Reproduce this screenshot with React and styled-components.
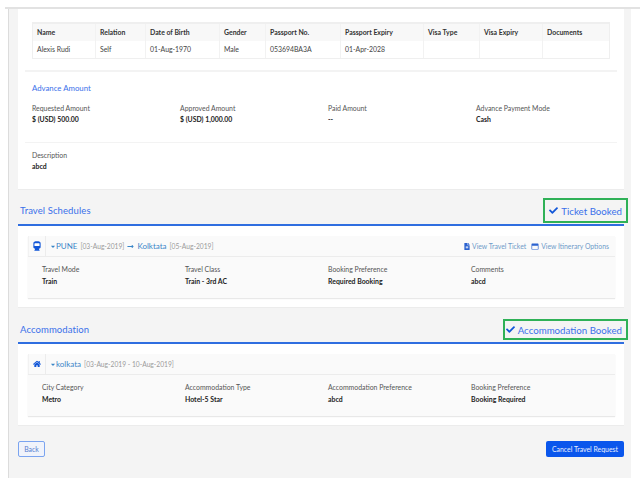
import styled, { createGlobalStyle } from 'styled-components';
import { FaCheck, FaCaretDown, FaHome, FaFileAlt, FaLongArrowAltRight, FaRegWindowMaximize } from 'react-icons/fa';

const GlobalStyle = createGlobalStyle`
  html, body {
    margin: 0;
    padding: 0;
    background: #fff;
    font-family: "Lato", "Liberation Sans", sans-serif;
    color: #333;
  }
`;

const Page = styled.div`
  width: 640px;
  height: 489px;
  padding: 7px 0 0 5px;
  box-sizing: border-box;
  overflow: hidden;
`;

const TopLine = styled.div`
  height: 2px;
  background: #e2e2e2;
`;

const Shell = styled.div`
  width: 623px;
  height: 469px;
  margin-left: 3px;
  box-sizing: border-box;
  padding: 0 7px 0 9px;
  background: #f4f4f4;
  border-left: 1px solid #dcdcdc;
`;

const Card = styled.section`
  background: #fff;
  box-shadow: 0 1px 0 #ececec;
  padding: 13px 0 17px;
`;

const Table = styled.div`
  margin: 0 14px;
  border: 1px solid #efefef;
  border-top-width: 2px;
`;

const Row = styled.div`
  display: grid;
  grid-template-columns: 62px 50px 74px 46px 75px 83px 56px 63px 1fr;
  height: 17px;
  background: ${p => (p.$head ? '#f8f8f8' : '#fff')};
`;

const Cell = styled.div`
  padding-left: 4px;
  font-size: 6.9px;
  line-height: 17px;
  white-space: nowrap;
  font-weight: ${p => (p.$head ? 700 : 400)};
  color: ${p => (p.$head ? '#333' : '#444')};
  & + & {
    border-left: 1px solid #f2f2f2;
  }
`;

const Divider = styled.div`
  height: ${p => p.$size || 1}px;
  margin: ${p => p.$margin};
  background: #f3f3f3;
`;

const SubTitle = styled.h3`
  margin: 0 14px;
  font-size: 7.8px;
  line-height: 12px;
  font-weight: 400;
  color: #3a70ea;
`;

const Fields = styled.div`
  display: grid;
  grid-template-columns: repeat(4, ${p => p.$width}px);
  padding: ${p => p.$padding};
`;

const Field = styled.div`
  font-size: 6.9px;
  line-height: 11px;
  white-space: nowrap;
`;

const Label = styled.div`
  color: #555;
`;

const Value = styled.div`
  color: #222;
  font-weight: 700;
`;

const SectionHead = styled.header`
  display: flex;
  align-items: center;
  justify-content: space-between;
  padding: ${p => p.$padding};
  margin-right: -4px;
  margin-left: 2px;
`;

const SectionTitle = styled.h2`
  margin: 0;
  font-size: 9.5px;
  font-weight: 400;
  color: #3a70ea;
  letter-spacing: 0.1px;
`;

const BookedBadge = styled.div`
  display: flex;
  align-items: center;
  justify-content: flex-end;
  gap: 3px;
  box-sizing: border-box;
  width: ${p => p.$width}px;
  height: ${p => p.$height}px;
  padding-right: 4px;
  border: 2px solid #2fb157;
  font-size: 9.7px;
  color: #3a70ea;
  white-space: nowrap;
  svg {
    flex-shrink: 0;
    width: 9px;
    height: 9px;
    color: #1257d8;
  }
`;

const SectionCard = styled.section`
  background: #fff;
  border-top: 2px solid #2f6ee0;
  padding: 10px 9px 9px 10px;
  box-shadow: 0 1px 0 #ececec;
`;

const Panel = styled.div`
  background: #fafafa;
  box-shadow: 0 1px 1px #e8e8e8;
  ${Value} {
    margin-top: 1px;
  }
`;

const PanelHead = styled.div`
  display: flex;
  align-items: center;
  height: 20px;
  border-bottom: 1px solid #ececec;
`;

const IconCell = styled.div`
  display: flex;
  align-items: center;
  justify-content: center;
  width: 16px;
  height: 100%;
  border-right: 1px solid #ececec;
  border-left: 1px solid #f2f2f2;
  color: #1257d8;
  svg {
    width: ${p => p.$size}px;
    height: ${p => p.$size}px;
  }
`;

const Route = styled.div`
  display: flex;
  align-items: center;
  flex: 1;
  padding-left: 4px;
  white-space: nowrap;
  color: #9a9a9a;
  font-size: 6.7px;
`;

const Caret = styled(FaCaretDown)`
  width: 6px;
  height: 7px;
  color: #3a86c8;
`;

const Place = styled.span`
  font-size: 8px;
  color: #3a86c8;
  margin-right: 3px;
`;

const Arrow = styled(FaLongArrowAltRight)`
  width: 9px;
  height: 7px;
  margin: 0 2px;
  color: #3a86c8;
`;

const Links = styled.div`
  display: flex;
  gap: 5px;
  padding-right: 6px;
`;

const TicketLink = styled.a`
  display: flex;
  align-items: center;
  gap: 2px;
  font-size: 6.85px;
  white-space: nowrap;
  color: #6f9bc9;
  svg {
    width: ${p => p.$icon}px;
    height: 7px;
    color: #2b62cf;
  }
`;

const Footer = styled.footer`
  display: flex;
  align-items: center;
  justify-content: space-between;
  margin-top: 16px;
`;

const BackButton = styled.button`
  width: 27px;
  height: 16px;
  padding: 0;
  border: 1.5px solid #7ba4f0;
  border-radius: 2px;
  background: #f0f3fb;
  font: inherit;
  font-size: 6.9px;
  color: #5a7fd0;
`;

const CancelButton = styled.button`
  width: 78px;
  height: 16px;
  padding: 0;
  border: 0;
  border-radius: 2px;
  background: #0a56ec;
  font: inherit;
  font-size: 6.9px;
  color: #e8efff;
`;

const travellers = [
  ['Name', 'Relation', 'Date of Birth', 'Gender', 'Passport No.', 'Passport Expiry', 'Visa Type', 'Visa Expiry', 'Documents'],
  ['Alexis Rudi', 'Self', '01-Aug-1970', 'Male', '053694BA3A', '01-Apr-2028', '', '', ''],
];

const advance = [
  ['Requested Amount', '$ (USD) 500.00'],
  ['Approved Amount', '$ (USD) 1,000.00'],
  ['Paid Amount', '--'],
  ['Advance Payment Mode', 'Cash'],
];

const travel = [
  ['Travel Mode', 'Train'],
  ['Travel Class', 'Train - 3rd AC'],
  ['Booking Preference', 'Required Booking'],
  ['Comments', 'abcd'],
];

const stay = [
  ['City Category', 'Metro'],
  ['Accommodation Type', 'Hotel-5 Star'],
  ['Accommodation Preference', 'abcd'],
  ['Booking Preference', 'Booking Required'],
];

function FieldList({ items }) {
  return items.map(([label, value]) => (
    <Field key={label}>
      <Label>{label}</Label>
      <Value>{value}</Value>
    </Field>
  ));
}

function TrainIcon() {
  return (
    <svg viewBox="0 0 10 11">
      <path fill="currentColor" d="M1 2.5C1 1 2.5.4 5 .4s4 .6 4 2.1V7c0 1-1 1.5-2 1.5l1 2.1H2l1-2.1C2 8.5 1 8 1 7z" />
      <rect x="2.2" y="2.6" width="5.6" height="3" rx=".5" fill="#fff" />
    </svg>
  );
}

export default function App() {
  return (
    <Page>
      <GlobalStyle />
      <TopLine />
      <Shell>
        <Card>
          <Table>
            {travellers.map((row, i) => (
              <Row key={row[0]} $head={i === 0}>
                {row.map((text, j) => (
                  <Cell key={j} $head={i === 0}>{text}</Cell>
                ))}
              </Row>
            ))}
          </Table>
          <Divider $size={2} $margin="11px 7px 10px" />
          <SubTitle>Advance Amount</SubTitle>
          <Fields $width={148} $padding="9px 14px 17px">
            <FieldList items={advance} />
          </Fields>
          <Divider $margin="0 7px 7px" />
          <Fields $width={148} $padding="0 14px">
            <FieldList items={[['Description', 'abcd']]} />
          </Fields>
        </Card>

        <SectionHead $padding="9px 0 1px">
          <SectionTitle>Travel Schedules</SectionTitle>
          <BookedBadge $width={85} $height={25}>
            <FaCheck />
            Ticket Booked
          </BookedBadge>
        </SectionHead>
        <SectionCard>
          <Panel>
            <PanelHead>
              <IconCell $size={10}><TrainIcon /></IconCell>
              <Route>
                <Caret />
                <Place>PUNE</Place>
                [03-Aug-2019]
                <Arrow />
                <Place>Kolktata</Place>
                [05-Aug-2019]
              </Route>
              <Links>
                <TicketLink $icon={6}><FaFileAlt />View Travel Ticket</TicketLink>
                <TicketLink $icon={8}><FaRegWindowMaximize />View Itinerary Options</TicketLink>
              </Links>
            </PanelHead>
            <Fields $width={143} $padding="7px 14px 11px">
              <FieldList items={travel} />
            </Fields>
          </Panel>
        </SectionCard>

        <SectionHead $padding="12px 0 2px">
          <SectionTitle>Accommodation</SectionTitle>
          <BookedBadge $width={125} $height={21}>
            <FaCheck />
            Accommodation Booked
          </BookedBadge>
        </SectionHead>
        <SectionCard>
          <Panel>
            <PanelHead>
              <IconCell $size={8}><FaHome /></IconCell>
              <Route>
                <Caret />
                <Place>kolkata</Place>
                [03-Aug-2019 - 10-Aug-2019]
              </Route>
            </PanelHead>
            <Fields $width={143} $padding="7px 14px 11px">
              <FieldList items={stay} />
            </Fields>
          </Panel>
        </SectionCard>

        <Footer>
          <BackButton>Back</BackButton>
          <CancelButton>Cancel Travel Request</CancelButton>
        </Footer>
      </Shell>
    </Page>
  );
}
